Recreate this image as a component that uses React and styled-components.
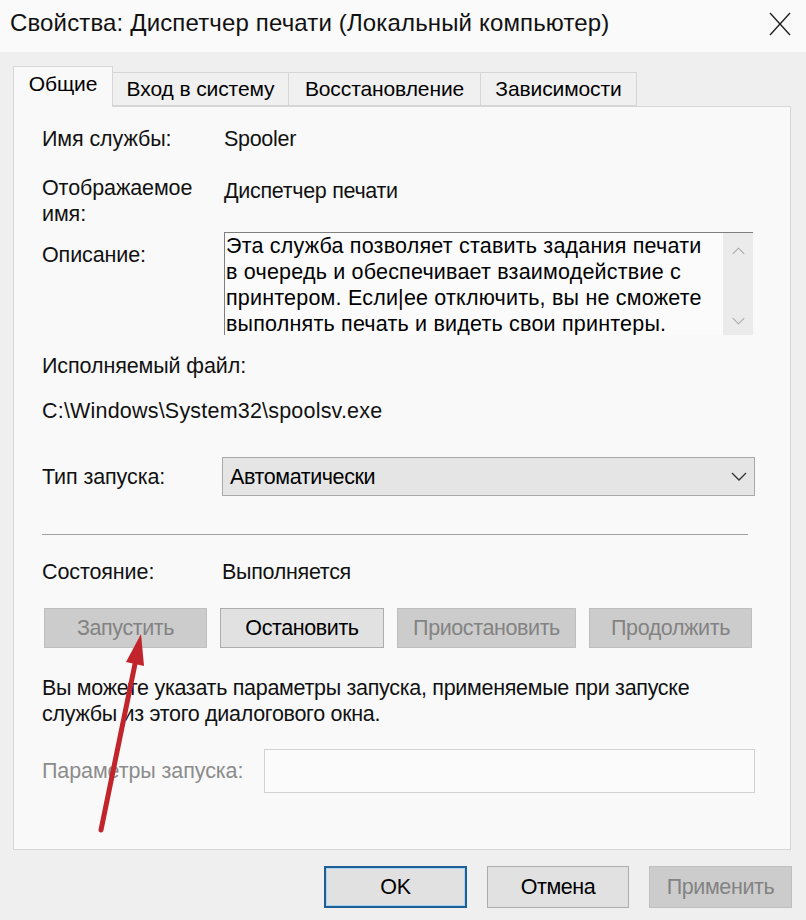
import React from "react";
import styled, { createGlobalStyle } from "styled-components";

const Global = createGlobalStyle`
  html, body { margin: 0; padding: 0; background: #efefef; }
  * { box-sizing: border-box; }
  body { font-family: "Liberation Sans", Arial, sans-serif; color: #000; }
`;

const Window = styled.div`
  position: relative;
  width: 806px;
  height: 920px;
  background: #efefef;
  display: flex;
  flex-direction: column;
  overflow: hidden;
`;

const TitleBar = styled.div`
  height: 52px;
  background: #fafafa;
  display: flex;
  align-items: center;
  justify-content: space-between;
  padding: 0 14px 6px 10px;
`;

const TitleText = styled.div`
  font-size: 24px;
  letter-spacing: 0.15px;
  color: #111;
`;

const CloseBtn = styled.div`
  width: 24px;
  height: 26px;
  display: flex;
  align-items: center;
  justify-content: center;
  margin-top: 2px;
`;

const Body = styled.div`
  padding: 14px 14px 0 13px;
  display: flex;
  flex-direction: column;
`;

const Tabs = styled.div`
  display: flex;
  align-items: flex-end;
  height: 40px;
  position: relative;
  z-index: 1;
`;

const Tab = styled.div`
  width: ${(p) => p.$w}px;
  height: ${(p) => (p.$active ? 41 : 34)}px;
  margin-bottom: ${(p) => (p.$active ? -1 : 0)}px;
  background: ${(p) => (p.$active ? "#f9f9f9" : "#f0f0f0")};
  border: 1px solid #d6d6d6;
  border-left: ${(p) => (p.$first ? "1px solid #d6d6d6" : "none")};
  border-bottom: ${(p) => (p.$active ? "none" : "1px solid #d6d6d6")};
  display: flex;
  align-items: center;
  justify-content: center;
  font-size: 21px;
  letter-spacing: -0.1px;
  padding-bottom: ${(p) => (p.$active ? 6 : 0)}px;
  color: #000;
`;

const Panel = styled.div`
  height: 744px;
  margin-right: 1px;
  background: #f9f9f9;
  border: 1px solid #d6d6d6;
  padding: 0 35px 0 28px;
  display: flex;
  flex-direction: column;
  font-size: 21.5px;
  line-height: 26px;
`;

const Row = styled.div`
  display: flex;
  align-items: ${(p) => p.$align || "center"};
  margin-top: ${(p) => p.$mt}px;
`;

const Label = styled.div`
  width: ${(p) => p.$w}px;
  flex-shrink: 0;
  padding-top: ${(p) => p.$pt || 0}px;
  color: ${(p) => (p.$disabled ? "#8c8c8c" : "#111")};
  letter-spacing: -0.1px;
`;

const Value = styled.div`
  padding-top: ${(p) => p.$pt || 0}px;
  color: #111;
  letter-spacing: ${(p) => p.$ls ?? -0.3}px;
`;

const DescBox = styled.div`
  width: 529px;
  height: 103px;
  border-top: 1px solid #7f7f7f;
  border-left: 1px solid #7f7f7f;
  background: #fbfbfb;
  display: flex;
  overflow: hidden;
`;

const DescText = styled.div`
  flex: 1;
  padding-left: 1px;
  line-height: 26px;
  letter-spacing: 0.2px;
  color: #000;
  white-space: nowrap;
`;

const ScrollTrack = styled.div`
  width: 30px;
  flex-shrink: 0;
  background: #ebebeb;
  display: flex;
  flex-direction: column;
  justify-content: space-between;
  align-items: center;
  padding: 14px 0 10px;
`;

const Select = styled.div`
  width: 533px;
  height: 39px;
  background: #e5e5e5;
  border: 1px solid #a9a9a9;
  display: flex;
  align-items: center;
  justify-content: space-between;
  padding: 0 7px 0 7px;
  letter-spacing: -0.4px;
`;

const Separator = styled.div`
  height: 1px;
  background: #a0a0a0;
  margin-top: ${(p) => p.$mt}px;
  margin-right: 7px;
`;

const ButtonRow = styled.div`
  display: flex;
  gap: 13px;
  margin-top: ${(p) => p.$mt}px;
  margin-left: 2px;
`;

const Button = styled.div`
  width: ${(p) => p.$w}px;
  height: ${(p) => p.$h || 40}px;
  flex-shrink: 0;
  display: flex;
  align-items: center;
  justify-content: center;
  font-size: 21.5px;
  letter-spacing: -0.4px;
  background: ${(p) => (p.$disabled ? "#cccccc" : "#e1e1e1")};
  border: 1px solid ${(p) => (p.$disabled ? "#bfbfbf" : "#adadad")};
  color: ${(p) => (p.$disabled ? "#838383" : "#000")};
  ${(p) =>
    p.$default &&
    `
    border: 2px solid #1f5f93;
    box-shadow: inset 0 0 0 1px #a9d6f7;
  `}
`;

const Paragraph = styled.div`
  margin-top: ${(p) => p.$mt}px;
  line-height: 26px;
  letter-spacing: -0.3px;
  color: #111;
`;

const Input = styled.div`
  width: 491px;
  height: 44px;
  background: #fbfbfb;
  border: 1px solid #d2d2d2;
`;

const Footer = styled.div`
  display: flex;
  justify-content: flex-end;
  gap: 20px;
  margin-top: 16px;
`;

const ArrowOverlay = styled.svg`
  position: absolute;
  left: 90px;
  top: 630px;
  pointer-events: none;
`;

const Chevron = ({ up, color = "#333", w = 16, h = 9 }) => (
  <svg width={w} height={h} viewBox="0 0 16 9">
    <polyline
      points={up ? "1,8 8,1 15,8" : "1,1 8,8 15,1"}
      fill="none"
      stroke={color}
      strokeWidth="1.3"
    />
  </svg>
);

export default function App() {
  return (
    <>
      <Global />
      <Window>
        <TitleBar>
          <TitleText>Свойства: Диспетчер печати (Локальный компьютер)</TitleText>
          <CloseBtn>
            <svg width="22" height="24" viewBox="0 0 22 24">
              <line x1="1" y1="1" x2="21" y2="23" stroke="#222" strokeWidth="1.4" />
              <line x1="21" y1="1" x2="1" y2="23" stroke="#222" strokeWidth="1.4" />
            </svg>
          </CloseBtn>
        </TitleBar>
        <Body>
          <Tabs>
            <Tab $w={100} $active $first>Общие</Tab>
            <Tab $w={176}>Вход в систему</Tab>
            <Tab $w={192}>Восстановление</Tab>
            <Tab $w={156}>Зависимости</Tab>
          </Tabs>
          <Panel>
            <Row $mt={19}>
              <Label $w={182}>Имя службы:</Label>
              <Value>Spooler</Value>
            </Row>
            <Row $mt={23} $align="flex-start">
              <Label $w={182}>
                Отображаемое
                <br />
                имя:
              </Label>
              <Value $pt={3}>Диспетчер печати</Value>
            </Row>
            <Row $mt={5} $align="flex-start">
              <Label $w={182} $pt={10}>Описание:</Label>
              <DescBox>
                <DescText>
                  Эта служба позволяет ставить задания печати
                  <br />
                  в очередь и обеспечивает взаимодействие с
                  <br />
                  принтером. Если|ее отключить, вы не сможете
                  <br />
                  выполнять печать и видеть свои принтеры.
                </DescText>
                <ScrollTrack>
                  <Chevron up color="#a8a8a8" w={13} h={8} />
                  <Chevron color="#a8a8a8" w={13} h={8} />
                </ScrollTrack>
              </DescBox>
            </Row>
            <Row $mt={18}>
              <Label $w={400}>Исполняемый файл:</Label>
            </Row>
            <Row $mt={19}>
              <Value $ls={0.2}>C:\Windows\System32\spoolsv.exe</Value>
            </Row>
            <Row $mt={33}>
              <Label $w={180}>Тип запуска:</Label>
              <Select>
                <span>Автоматически</span>
                <Chevron />
              </Select>
            </Row>
            <Separator $mt={38} />
            <Row $mt={24}>
              <Label $w={180}>Состояние:</Label>
              <Value>Выполняется</Value>
            </Row>
            <ButtonRow $mt={23}>
              <Button $w={163} $disabled>Запустить</Button>
              <Button $w={164}>Остановить</Button>
              <Button $w={179} $disabled>Приостановить</Button>
              <Button $w={163} $disabled>Продолжить</Button>
            </ButtonRow>
            <Paragraph $mt={27}>
              Вы можете указать параметры запуска, применяемые при запуске
              <br />
              службы из этого диалогового окна.
            </Paragraph>
            <Row $mt={22}>
              <Label $w={222} $disabled>Параметры запуска:</Label>
              <Input />
            </Row>
          </Panel>
          <Footer>
            <Button $w={143} $h={42} $default>OK</Button>
            <Button $w={142} $h={42}>Отмена</Button>
            <Button $w={143} $h={42} $disabled>Применить</Button>
          </Footer>
        </Body>
        <ArrowOverlay width="70" height="210" viewBox="0 0 70 210">
          <line x1="11" y1="200" x2="45" y2="34" stroke="#c1242b" strokeWidth="5" strokeLinecap="round" />
          <polygon points="51,4 54,36 36,32" fill="#c1242b" />
        </ArrowOverlay>
      </Window>
    </>
  );
}
